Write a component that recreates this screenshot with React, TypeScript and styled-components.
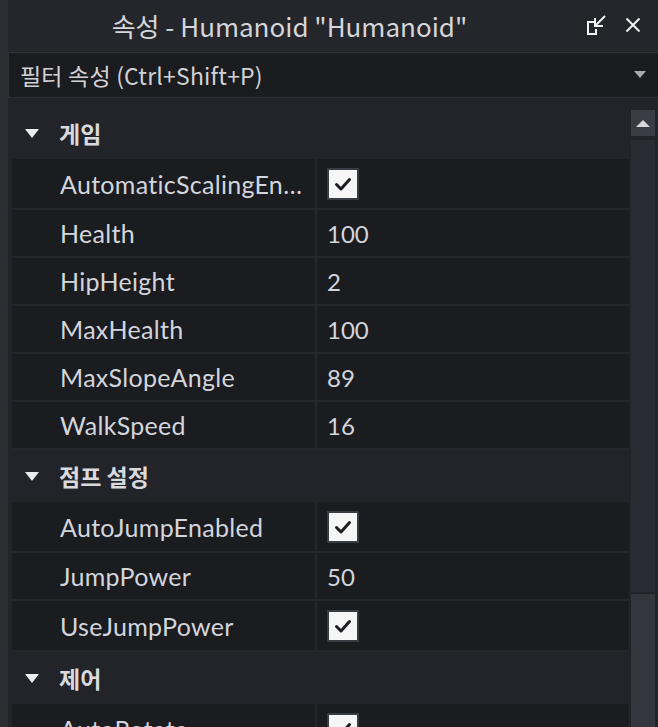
import React from 'react';
import styled, { createGlobalStyle } from 'styled-components';

const GlobalStyle = createGlobalStyle`
  html, body {
    margin: 0;
    padding: 0;
    background: #2c2e34;
    overflow: hidden;
  }
  * {
    box-sizing: border-box;
  }
`;

const Frame = styled.div`
  display: flex;
  width: 658px;
  height: 727px;
  padding-left: 8px;
  background: #2c2e34;
  font-family: Lato, 'Noto Sans CJK KR', sans-serif;
`;

const Panel = styled.div`
  display: flex;
  flex-direction: column;
  flex: 1;
  min-width: 0;
  background: #232429;
  overflow: hidden;
`;

const TitleBar = styled.div`
  display: flex;
  align-items: center;
  height: 52px;
  padding-bottom: 2px;
  background: #25262b;
`;

const Title = styled.div`
  flex: 1;
  text-align: center;
  font-size: 26px;
  color: #d6d6da;
  font-family: 'Noto Sans CJK KR', sans-serif;
  padding-right: 14px;
  white-space: nowrap;
`;

const TitleIcons = styled.div`
  display: flex;
  align-items: center;
  gap: 15px;
  padding-right: 14px;
`;

const IconButton = styled.span`
  display: flex;
  align-items: center;
  justify-content: center;
  width: 22px;
  height: 22px;
  color: #f0f0f0;
`;

const FilterBox = styled.div`
  display: flex;
  align-items: center;
  height: 46px;
  padding: 0 12px 0 11px;
  background: #1b1c20;
  border: 1px solid #30323a;
  border-right: none;
`;

const FilterText = styled.div`
  flex: 1;
  font-size: 23px;
  color: #d2d2d6;
  font-family: 'Noto Sans CJK KR', sans-serif;
  letter-spacing: 0.2px;
`;

const Body = styled.div`
  display: flex;
  flex: 1;
  min-height: 0;
  margin-top: 9px;
  padding-right: 3px;
`;

const List = styled.div`
  flex: 1;
  min-width: 0;
`;

const Header = styled.div`
  display: flex;
  align-items: center;
  height: 52px;
  padding-left: 17px;
  background: #232429;
  color: #dadade;
  font-size: 23px;
  font-weight: 700;
  font-family: 'Noto Sans CJK KR', sans-serif;
`;

const Caret = styled.span`
  width: 0;
  height: 0;
  border-left: 7.5px solid transparent;
  border-right: 7.5px solid transparent;
  border-top: 9px solid #ececec;
  margin-right: 20px;
`;

const Row = styled.div<{ $tall?: boolean }>`
  display: flex;
  height: ${(p) => (p.$tall ? 51 : 48)}px;
  margin-left: 4px;
  border-bottom: 2px solid #26272c;
  background: #1b1c20;
`;

const NameCell = styled.div`
  display: flex;
  align-items: center;
  width: 305px;
  padding-left: 48px;
  padding-right: 6px;
  border-right: 2px solid #25262b;
  color: #d3d5dc;
  font-size: 25px;
  letter-spacing: 0.3px;
  white-space: nowrap;
  overflow: hidden;
  span {
    overflow: hidden;
    text-overflow: ellipsis;
  }
`;

const ValueCell = styled.div`
  display: flex;
  align-items: center;
  flex: 1;
  padding-left: 10px;
  color: #d3d5dc;
  font-size: 24px;
`;

const Checkbox = styled.span`
  display: flex;
  align-items: center;
  justify-content: center;
  width: 32px;
  height: 32px;
  border: 2px solid #3a3c43;
  background: #f6f6f6;
`;

const ScrollBar = styled.div`
  display: flex;
  flex-direction: column;
  width: 24px;
  padding-top: 3px;
  margin-left: 2px;
`;

const ScrollButton = styled.div`
  display: flex;
  align-items: center;
  justify-content: center;
  height: 26px;
  background: #3a3c44;
  margin-bottom: 4px;
`;

const Track = styled.div<{ $h: number }>`
  height: ${(p) => p.$h}px;
  background: #2a2c33;
`;

const Thumb = styled.div`
  flex: 1;
  background: #34363d;
  margin-top: 2px;
`;

const Check = () => (
  <Checkbox>
    <svg width="20" height="20" viewBox="0 0 20 20">
      <polyline points="3.5,10.5 8,15 16.5,5.5" fill="none" stroke="#1d1e22" strokeWidth="3" strokeLinecap="round" strokeLinejoin="round" />
    </svg>
  </Checkbox>
);

type Prop = { name: string; value?: string; check?: boolean };

const sections: { title: string; props: Prop[] }[] = [
  {
    title: '게임',
    props: [
      { name: 'AutomaticScalingEnabled', check: true },
      { name: 'Health', value: '100' },
      { name: 'HipHeight', value: '2' },
      { name: 'MaxHealth', value: '100' },
      { name: 'MaxSlopeAngle', value: '89' },
      { name: 'WalkSpeed', value: '16' },
    ],
  },
  {
    title: '점프 설정',
    props: [
      { name: 'AutoJumpEnabled', check: true },
      { name: 'JumpPower', value: '50' },
      { name: 'UseJumpPower', check: true },
    ],
  },
  {
    title: '제어',
    props: [{ name: 'AutoRotate', check: true }],
  },
];

const App = () => {
  return (
    <>
      <GlobalStyle />
      <Frame>
        <Panel>
          <TitleBar>
            <Title>속성 - Humanoid "Humanoid"</Title>
            <TitleIcons>
              <IconButton>
                <svg width="22" height="22" viewBox="0 0 22 22" fill="none" stroke="#f2f2f2" strokeWidth="2">
                  <polyline points="9,8 3,8 3,20 11,20 11,15" />
                  <line x1="20" y1="2" x2="10" y2="12" />
                  <polyline points="10,4 10,12 18,12" />
                </svg>
              </IconButton>
              <IconButton>
                <svg width="16" height="16" viewBox="0 0 16 16" stroke="#f2f2f2" strokeWidth="2">
                  <line x1="1.5" y1="1.5" x2="14.5" y2="14.5" />
                  <line x1="14.5" y1="1.5" x2="1.5" y2="14.5" />
                </svg>
              </IconButton>
            </TitleIcons>
          </TitleBar>
          <FilterBox>
            <FilterText>필터 속성 (Ctrl+Shift+P)</FilterText>
            <svg width="12" height="8" viewBox="0 0 12 8">
              <polygon points="0,0 12,0 6,7" fill="#a9aab0" />
            </svg>
          </FilterBox>
          <Body>
            <List>
              {sections.map((s) => (
                <React.Fragment key={s.title}>
                  <Header>
                    <Caret />
                    {s.title}
                  </Header>
                  {s.props.map((p) => (
                    <Row key={p.name} $tall={p.check}>
                      <NameCell>
                        <span>{p.name}</span>
                      </NameCell>
                      <ValueCell>{p.check ? <Check /> : p.value}</ValueCell>
                    </Row>
                  ))}
                </React.Fragment>
              ))}
            </List>
            <ScrollBar>
              <ScrollButton>
                <svg width="14" height="8" viewBox="0 0 14 8">
                  <polygon points="0,8 14,8 7,1" fill="#d8d8dc" />
                </svg>
              </ScrollButton>
              <Track $h={452} />
              <Thumb />
            </ScrollBar>
          </Body>
        </Panel>
      </Frame>
    </>
  );
};

export default App;
